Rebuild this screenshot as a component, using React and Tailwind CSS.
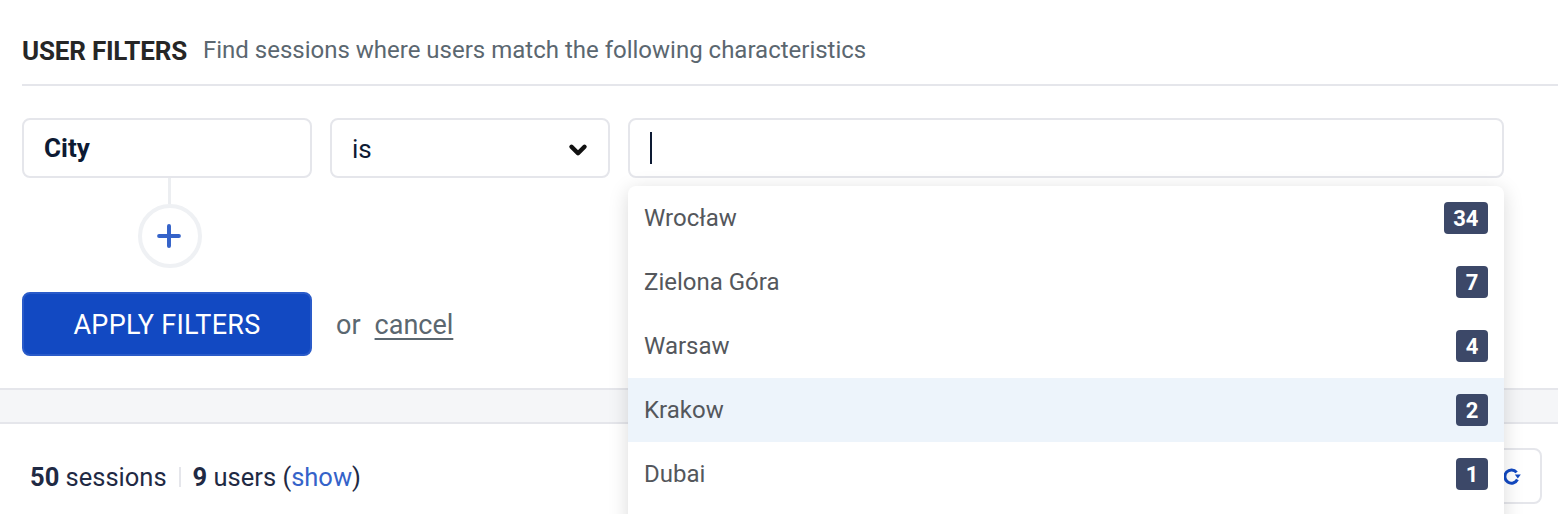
import React from 'react';
import { ChevronDown, Plus } from 'lucide-react';

const cities = [
    { name: 'Wrocław', count: 34 },
    { name: 'Zielona Góra', count: 7 },
    { name: 'Warsaw', count: 4 },
    { name: 'Krakow', count: 2, active: true },
    { name: 'Dubai', count: 1 },
];

function RefreshIcon() {
    return (
        <svg width="18" height="18" viewBox="0 0 18 18" fill="none" className="text-[#1249c2]">
            <path d="M13.6 5.4A6.6 6.6 0 1 0 14.4 12.5" stroke="currentColor" strokeWidth="3" />
            <path d="M11.8 7.4h6l-3 4.2z" fill="currentColor" />
        </svg>
    );
}

export default function App() {
    return (
        <div className="h-[514px] w-[1558px] overflow-hidden bg-white font-['Roboto',sans-serif] relative">
            <div className="pl-[22px] pt-[36px]">
                <div className="flex items-start h-[50px] border-b-2 border-[#e5e6eb]">
                    <h2 className="text-[26px] leading-[30px] font-bold text-[#262626] tracking-[-0.2px]">USER FILTERS</h2>
                    <p className="ml-[16px] text-[24px] leading-[28px] text-[#5b6770]">Find sessions where users match the following characteristics</p>
                </div>
                <div className="flex gap-[18px] mt-[32px]">
                    <div className="flex flex-col w-[290px]">
                        <div className="h-[60px] border-2 border-[#e5e6eb] rounded-[8px] flex items-center pl-[20px] text-[26px] font-bold text-[#0d1a33]">City</div>
                        <div className="w-[3px] h-[26px] bg-[#eceef1] self-center ml-[5px]"></div>
                        <div className="w-[64px] h-[64px] rounded-full border-[4px] border-[#eff1f4] self-center flex items-center justify-center ml-[6px]">
                            <Plus size={34} strokeWidth={2.8} className="text-[#3563c9] -ml-[2px]" />
                        </div>
                    </div>
                    <div className="w-[280px] h-[60px] border-2 border-[#e5e6eb] rounded-[8px] flex items-center justify-between pl-[20px] pr-[17px] text-[26px] text-[#0d1a33]">
                        <span className="pt-[2px]">is</span>
                        <ChevronDown size={26} strokeWidth={4.1} className="text-[#111] mt-[4px]" />
                    </div>
                    <div className="w-[876px] h-[60px] border-2 border-[#e5e6eb] rounded-[8px] flex items-center pl-[20px]">
                        <div className="w-[2px] h-[32px] bg-[#0d1a33]"></div>
                    </div>
                </div>
                <div className="flex items-center mt-[24px] h-[64px]">
                    <button className="w-[290px] h-[64px] pt-[3px] bg-[#1249c2] border-2 border-[#2a5bc9] rounded-[8px] text-white text-[27px] tracking-[0.3px]">APPLY FILTERS</button>
                    <span className="ml-[24px] pt-[2px] text-[27px] text-[#5b6770]">or</span>
                    <a className="ml-[14px] pt-[2px] text-[27px] text-[#5b6770] underline underline-offset-[4px]">cancel</a>
                </div>
            </div>
            <div className="mt-[32px] h-[36px] bg-[#f5f6f8] border-y-2 border-[#e5e6eb]"></div>
            <div className="flex items-start justify-between pt-[24px] pl-[30px] pr-[16px]">
                <div className="flex items-center h-[56px] pt-[2px] text-[25.5px] text-[#1f2a44]">
                    <span><b className="font-bold">50</b> sessions</span>
                    <span className="mx-[12px] w-[2px] h-[20px] bg-[#e5e6eb]"></span>
                    <span><b className="font-bold">9</b> users (<a className="text-[#3563c9]">show</a>)</span>
                </div>
                <div className="w-[80px] h-[56px] border-2 border-[#e5e6eb] rounded-[8px] flex items-center justify-end pr-[19px]">
                    <RefreshIcon />
                </div>
            </div>
            <div className="absolute left-[628px] top-[186px] w-[876px] h-[340px] rounded-t-[8px] bg-white shadow-[0_4px_20px_rgba(0,0,0,0.15)]">
                {cities.map(c => (
                    <div key={c.name} className={`h-[64px] flex items-center justify-between pl-[16px] pr-[16px] ${c.active ? 'bg-[#edf4fb]' : ''}`}>
                        <span className="text-[24px] text-[#54575c]">{c.name}</span>
                        <span className="min-w-[32px] h-[32px] px-[9.5px] rounded-[4px] bg-[#3c4868] text-white text-[22px] font-bold flex items-center justify-center">{c.count}</span>
                    </div>
                ))}
            </div>
        </div>
    );
}
